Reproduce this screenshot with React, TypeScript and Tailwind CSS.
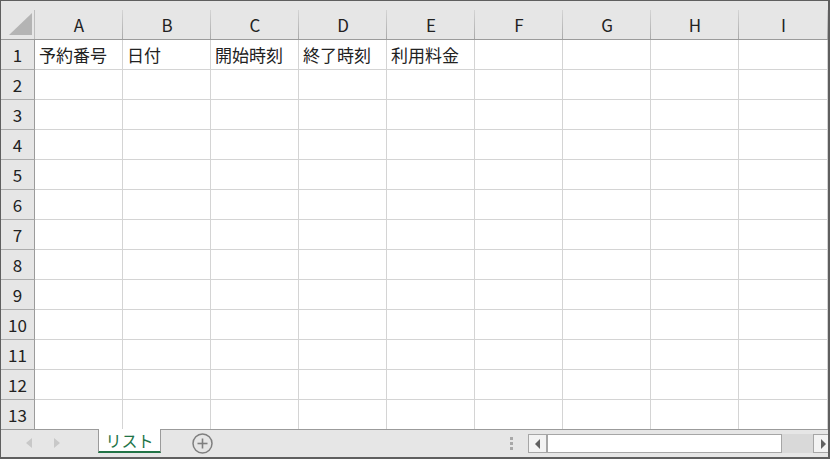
import React from 'react';

const columns = ['A', 'B', 'C', 'D', 'E', 'F', 'G', 'H', 'I'];
const firstRow = ['予約番号', '日付', '開始時刻', '終了時刻', '利用料金', '', '', '', ''];
const rows = Array.from({ length: 13 }, (_, i) => i + 1);

const font = { fontFamily: '"Noto Sans CJK JP", "Noto Sans", sans-serif' };

export default function App() {
  return (
    <div
      className="w-[830px] h-[459px] bg-white border-t border-l border-r-2 border-b-2 border-[#5f5f5f] flex flex-col overflow-hidden"
      style={font}
    >
      {/* Column headers */}
      <div className="flex h-[39px] shrink-0 bg-[#e6e6e6] border-b border-[#9b9b9b]">
        <div className="relative w-[34px] shrink-0 after:absolute after:right-0 after:top-[9px] after:bottom-0 after:w-px after:bg-[#bdbdbd]">
          <svg width="33" height="38" className="block">
            <polygon points="31,12 31,34 8,34" fill="#b4b4b4" />
          </svg>
        </div>
        {columns.map((c, i) => (
          <div
            key={c}
            className={`relative flex items-center justify-center pt-[9px] text-[17px] text-[#222222] after:absolute after:right-0 after:top-[9px] after:bottom-0 after:w-px after:bg-gradient-to-b after:from-[#d4d4d4] after:to-[#a9a9a9] ${
              i === columns.length - 1 ? 'flex-1' : 'w-[88px] shrink-0'
            }`}
          >
            {c}
          </div>
        ))}
      </div>

      {/* Rows */}
      {rows.map(r => (
        <div key={r} className="flex h-[30px] shrink-0">
          <div className="w-[34px] shrink-0 flex items-center justify-center bg-[#e6e6e6] border-r border-b border-r-[#9b9b9b] border-b-[#ababab] text-[17px] text-[#222222]">
            {r}
          </div>
          {columns.map((c, i) => (
            <div
              key={c}
              className={`flex items-center pl-[4px] border-r border-b border-[#d4d4d4] text-[17px] text-[#222222] whitespace-nowrap ${
                i === columns.length - 1 ? 'flex-1' : 'w-[88px] shrink-0'
              }`}
            >
              {r === 1 ? firstRow[i] : ''}
            </div>
          ))}
        </div>
      ))}

      {/* Sheet tabs + scroll bar */}
      <div className="relative -mt-px flex flex-1 items-start bg-[#e6e6e6] border-t border-[#9b9b9b]">
        <div className="w-[97px] shrink-0 flex items-center pt-[8px]">
          <svg width="6" height="10" className="ml-[25px]">
            <polygon points="6,0 6,10 0,5" fill="#c8c8c8" />
          </svg>
          <svg width="6" height="10" className="ml-[22px]">
            <polygon points="0,0 0,10 6,5" fill="#c8c8c8" />
          </svg>
        </div>

        <div className="-mt-px h-[24px] w-[63px] shrink-0 bg-white border-x border-[#9b9b9b] border-b-2 border-b-[#217346] flex items-center justify-center text-[16px] text-[#217346]">
          リスト
        </div>

        <svg width="21" height="21" viewBox="0 0 21 21" className="ml-[31px] mt-[3px] shrink-0">
          <circle cx="10.5" cy="10.5" r="9.5" fill="none" stroke="#7f7f7f" strokeWidth="1.5" />
          <line x1="5.5" y1="10.5" x2="15.5" y2="10.5" stroke="#7f7f7f" strokeWidth="1.6" />
          <line x1="10.5" y1="5.5" x2="10.5" y2="15.5" stroke="#7f7f7f" strokeWidth="1.6" />
        </svg>

        <div className="flex-1" />

        <div className="flex flex-col gap-[2px] mt-[7px] shrink-0">
          <span className="block w-[3px] h-[3px] bg-[#a8a8a8]" />
          <span className="block w-[3px] h-[3px] bg-[#a8a8a8]" />
          <span className="block w-[3px] h-[3px] bg-[#a8a8a8]" />
        </div>

        <div className="ml-[15px] mt-[4px] h-[19px] w-[300px] shrink-0 flex">
          <div className="w-[19px] h-full shrink-0 border border-[#a6a6a6] bg-[#f3f3f3] flex items-center justify-center">
            <svg width="5" height="10">
              <polygon points="5,0 5,10 0,5" fill="#606060" />
            </svg>
          </div>
          <div className="w-[235px] h-full shrink-0 border border-[#a6a6a6] bg-white" />
          <div className="flex-1 h-full bg-[#d9d9d9]" />
          <div className="w-[15px] h-full shrink-0 border-y border-l border-[#a6a6a6] bg-[#f3f3f3] flex items-center pl-[7px]">
            <svg width="5" height="10">
              <polygon points="0,0 0,10 5,5" fill="#606060" />
            </svg>
          </div>
        </div>
      </div>
    </div>
  );
}
